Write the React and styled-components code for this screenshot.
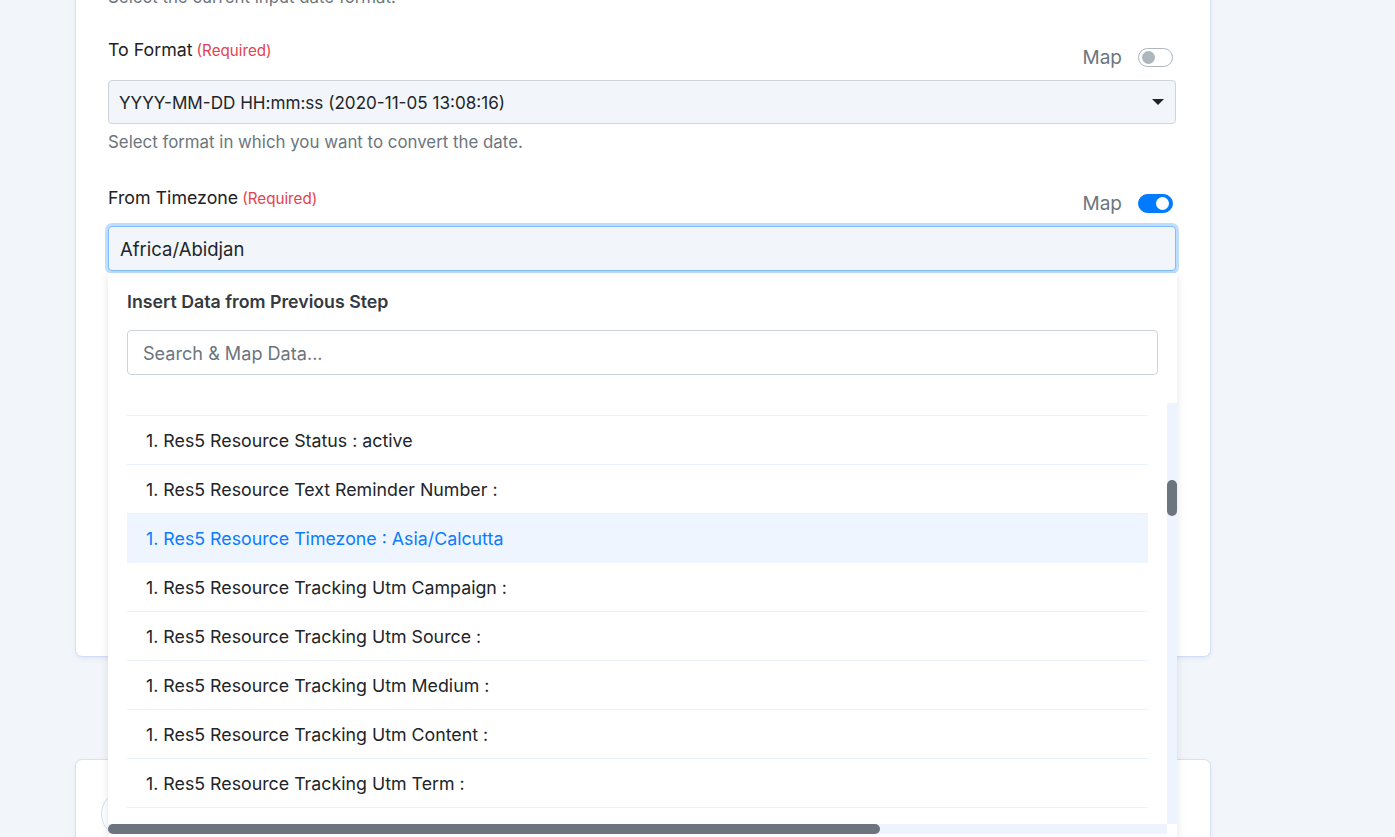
import React, { useLayoutEffect, useRef } from "react";
import styled, { createGlobalStyle, css } from "styled-components";

const GlobalStyle = createGlobalStyle`
  html, body {
    margin: 0;
    padding: 0;
    height: 100%;
    overflow: hidden;
    background: #f2f5f9;
  }
  body {
    font-family: Inter, Lato, "Noto Sans", sans-serif;
    color: #212529;
  }
  * { box-sizing: border-box; }
`;

const Page = styled.div`
  display: flex;
  flex-direction: column;
  align-items: flex-start;
  gap: 104px;
  padding-left: 76px;
`;

const Card = styled.section`
  position: relative;
  width: 1134px;
  background: #ffffff;
  border-radius: ${(p) => (p.$cut ? "0 0 6px 6px" : "6px 6px 0 0")};
  box-shadow: 0 0 0 1px rgba(196, 212, 245, 0.55), 0 2px 5px rgba(120, 150, 210, 0.18);
  padding: ${(p) => p.$pad};
  margin-top: ${(p) => p.$offset || 0}px;
  min-height: ${(p) => p.$minH || 0}px;
`;

const Help = styled.div`
  font-size: 16.85px;
  line-height: 24px;
  color: #6c757d;
  margin-top: ${(p) => p.$mt || 0}px;
`;

const Field = styled.div`
  margin-top: ${(p) => p.$mt || 0}px;
  position: relative;
`;

const FieldHeader = styled.div`
  display: flex;
  justify-content: space-between;
  align-items: flex-start;
  margin-bottom: 11px;
`;

const Label = styled.label`
  font-size: 17.8px;
  line-height: 24px;
  color: #1e2125;
`;

const Required = styled.span`
  font-size: 15.2px;
  color: #e5414f;
  margin-left: 4px;
`;

const MapGroup = styled.div`
  display: flex;
  align-items: center;
  gap: 16px;
  height: 24px;
  margin-top: ${(p) => p.$mt}px;
  margin-right: 3px;
`;

const MapText = styled.span`
  font-size: 19px;
  color: #6c757d;
`;

const Switch = styled.span`
  position: relative;
  display: inline-block;
  width: 35px;
  height: 19px;
  border-radius: 10px;
  border: 1px solid ${(p) => (p.$on ? "#007bff" : "#adb5bd")};
  background: ${(p) => (p.$on ? "#007bff" : "#ffffff")};
  &::after {
    content: "";
    position: absolute;
    top: 2px;
    width: 13px;
    height: 13px;
    border-radius: 50%;
    background: ${(p) => (p.$on ? "#ffffff" : "#adb5bd")};
    ${(p) => (p.$on ? css`right: 3px;` : css`left: 3px;`)}
  }
`;

const SelectBox = styled.div`
  display: flex;
  align-items: center;
  justify-content: space-between;
  height: 44px;
  padding: 0 11px 0 10px;
  background: #f2f5f9;
  border: 1px solid #ced4da;
  border-radius: 4px;
  font-size: 17.1px;
  color: #212529;
`;

const Caret = styled.span`
  width: 0;
  height: 0;
  border-left: 6px solid transparent;
  border-right: 6px solid transparent;
  border-top: 6px solid #212529;
`;

const InputWrap = styled.div`
  position: relative;
`;

const TextInput = styled.div`
  display: flex;
  align-items: center;
  height: 45px;
  padding: 0 11px;
  background: #f2f5f9;
  border: 1px solid #80bdff;
  border-radius: 4px;
  box-shadow: 0 0 0 3px rgba(0, 123, 255, 0.25);
  font-size: 18.5px;
  color: #212529;
`;

const Dropdown = styled.div`
  position: absolute;
  top: calc(100% + 2px);
  left: 0;
  width: 1069px;
  height: 600px;
  background: #ffffff;
  box-shadow: 0 2px 8px rgba(30, 40, 60, 0.12);
  padding-top: 17px;
  z-index: 5;
  display: flex;
  flex-direction: column;
`;

const DropTitle = styled.div`
  padding: 0 19px;
  font-size: 17.75px;
  line-height: 24px;
  font-weight: 600;
  color: #343a40;
`;

const Search = styled.div`
  margin: 16px 19px 0;
  height: 45px;
  display: flex;
  align-items: center;
  padding: 0 15px;
  border: 1px solid #ced4da;
  border-radius: 4px;
  font-size: 18.1px;
  color: #6c757d;
`;

const ScrollArea = styled.div`
  margin-top: 28px;
  display: flex;
  flex-direction: column;
`;

const ScrollRow = styled.div`
  display: flex;
  height: 421px;
`;

const ListViewport = styled.div`
  flex: 1;
  overflow: hidden;
  padding: 0 19px;
`;

const Item = styled.div`
  height: 49px;
  display: flex;
  align-items: center;
  padding-left: 19px;
  border-bottom: 1px solid ${(p) => (p.$active ? "#eef5fe" : "#e9f1fc")};
  background: ${(p) => (p.$active ? "#eef5fe" : "transparent")};
  color: ${(p) => (p.$active ? "#0b7bff" : "#212529")};
  font-size: 17.8px;
  white-space: nowrap;
`;

const VTrack = styled.div`
  position: relative;
  width: 10px;
  background: #edf4fd;
`;

const VThumb = styled.div`
  position: absolute;
  left: 0;
  top: ${(p) => p.$top}px;
  width: 10px;
  height: ${(p) => p.$size}px;
  border-radius: 5px;
  background: #6c757d;
`;

const HRow = styled.div`
  display: flex;
  height: 10px;
`;

const HTrack = styled.div`
  flex: 1;
  display: flex;
  background: #edf4fd;
`;

const HThumb = styled.div`
  width: ${(p) => p.$size}px;
  height: 10px;
  border-radius: 5px;
  background: #6c757d;
`;

const Corner = styled.div`
  width: 10px;
`;

const CardRow = styled.div`
  display: flex;
  align-items: center;
  justify-content: space-between;
`;

const Avatar = styled.div`
  width: 48px;
  height: 48px;
  border-radius: 50%;
  border: 1px solid #d3e1f7;
`;

const Chevron = styled.svg`
  width: 12px;
  height: 12px;
  color: #6c757d;
`;

const listItems = [
  "1. Res5 Resource Sms Reminder : true",
  "1. Res5 Resource Slug : res5",
  "1. Res5 Resource Start Time :",
  "1. Res5 Resource Status : active",
  "1. Res5 Resource Text Reminder Number :",
  "1. Res5 Resource Timezone : Asia/Calcutta",
  "1. Res5 Resource Tracking Utm Campaign :",
  "1. Res5 Resource Tracking Utm Source :",
  "1. Res5 Resource Tracking Utm Medium :",
  "1. Res5 Resource Tracking Utm Content :",
  "1. Res5 Resource Tracking Utm Term :",
  "1. Res5 Resource Updated At : 2020-11-05",
  "1. Res5 Resource Url :",
];

function MapToggle({ on, mt }) {
  return (
    <MapGroup $mt={mt}>
      <MapText>Map</MapText>
      <Switch $on={on} />
    </MapGroup>
  );
}

export default function App() {
  const listRef = useRef(null);
  useLayoutEffect(() => {
    if (listRef.current) listRef.current.scrollTop = 3 * 49 - 13;
  }, []);

  return (
    <>
      <GlobalStyle />
      <Page>
        <Card $cut $offset={-15} $pad="0 34px 385px 32px">
          <Help>Select the current input date format.</Help>

          <Field $mt={29}>
            <FieldHeader>
              <Label>
                To Format<Required>(Required)</Required>
              </Label>
              <MapToggle on={false} mt={7} />
            </FieldHeader>
            <SelectBox>
              <span>YYYY-MM-DD HH:mm:ss (2020-11-05 13:08:16)</span>
              <Caret />
            </SelectBox>
            <Help $mt={6}>Select format in which you want to convert the date.</Help>
          </Field>

          <Field $mt={32}>
            <FieldHeader>
              <Label>
                From Timezone<Required>(Required)</Required>
              </Label>
              <MapToggle on={true} mt={5} />
            </FieldHeader>
            <InputWrap>
              <TextInput>Africa/Abidjan</TextInput>
              <Dropdown>
                <DropTitle>Insert Data from Previous Step</DropTitle>
                <Search>Search &amp; Map Data...</Search>
                <ScrollArea>
                  <ScrollRow>
                    <ListViewport ref={listRef}>
                      {listItems.map((t) => (
                        <Item key={t} $active={t.includes("Timezone")}>
                          {t}
                        </Item>
                      ))}
                    </ListViewport>
                    <VTrack>
                      <VThumb $top={77} $size={36} />
                    </VTrack>
                  </ScrollRow>
                  <HRow>
                    <HTrack>
                      <HThumb $size={772} />
                    </HTrack>
                    <Corner />
                  </HRow>
                </ScrollArea>
              </Dropdown>
            </InputWrap>
          </Field>
        </Card>

        <Card $pad="30px 33px 30px 25px" $minH={140}>
          <CardRow>
            <Avatar />
            <Chevron viewBox="0 0 12 12" fill="none" stroke="currentColor" strokeWidth="1.6">
              <path d="M4 2l4 4-4 4" />
            </Chevron>
          </CardRow>
        </Card>
      </Page>
    </>
  );
}
